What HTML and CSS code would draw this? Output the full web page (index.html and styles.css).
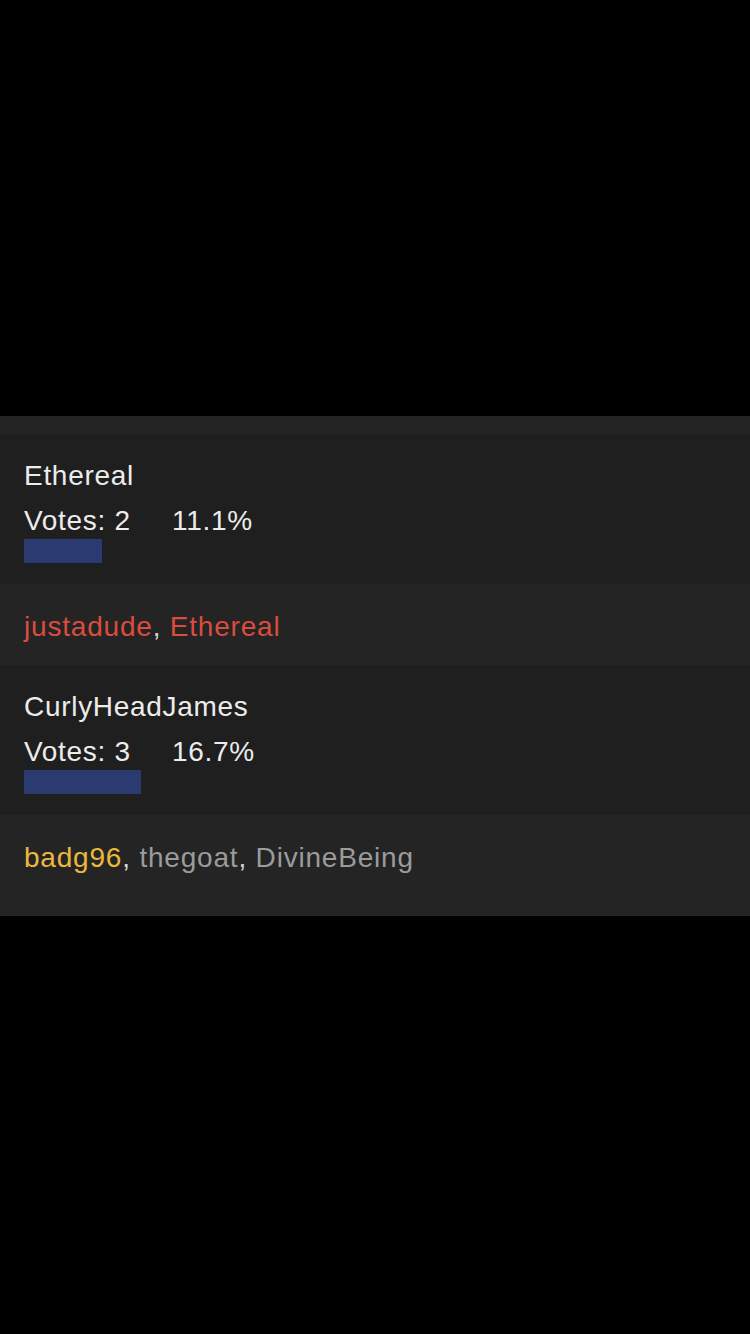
FILE: index.html
```html
<!DOCTYPE html>
<html lang="en">
<head>
  <meta charset="UTF-8" />
  <meta name="viewport" content="width=device-width, initial-scale=1.0"/>
  <title>Poll results</title>
  <link rel="stylesheet" href="styles.css">
</head>
<body>

<div class="results">
  <div class="option">
    <div class="name">Ethereal</div>
    <div class="stats">
      <span class="votes">Votes: 2</span>
      <span class="percent">11.1%</span>
    </div>
    <div class="bar" style="width: 78px"></div>
  </div>
  <div class="voters">
    <span class="red">justadude</span>, <span class="red">Ethereal</span>
  </div>

  <div class="option">
    <div class="name">CurlyHeadJames</div>
    <div class="stats">
      <span class="votes">Votes: 3</span>
      <span class="percent">16.7%</span>
    </div>
    <div class="bar" style="width: 117px"></div>
  </div>
  <div class="voters">
    <span class="gold">badg96</span>, <span class="grey">thegoat</span>, <span class="grey">DivineBeing</span>
  </div>
</div>

</body>
</html>
```

FILE: styles.css
```css
body {
  font-family: "Liberation Sans", Arial, sans-serif;
  background-color: #000;
  color: #ececec;
  margin: 0;
  padding: 0;
}
.results {
  margin-top: 416px;
  background-color: #242424;
  padding: 18px 0 20px;
}
.option {
  background-color: #1f1f1f;
  height: 150px;
  padding: 0 24px;
  box-sizing: border-box;
  font-size: 28px;
  letter-spacing: 0.7px;
}
.name {
  padding-top: 25px;
  line-height: 34px;
}
.stats {
  display: flex;
  line-height: 46px;
  margin-top: 5px;
}
.votes {
  width: 148px;
}
.bar {
  height: 24px;
  margin-top: -5px;
  background-color: #2b3a70;
}
.voters {
  height: 76px;
  padding: 5px 24px 0;
  font-size: 28px;
  letter-spacing: 0.8px;
  line-height: 76px;
  color: #d4d4d4;
}
.red {
  color: #da4c3e;
}
.gold {
  color: #eab83c;
}
.grey {
  color: #9b9b9b;
}
```
